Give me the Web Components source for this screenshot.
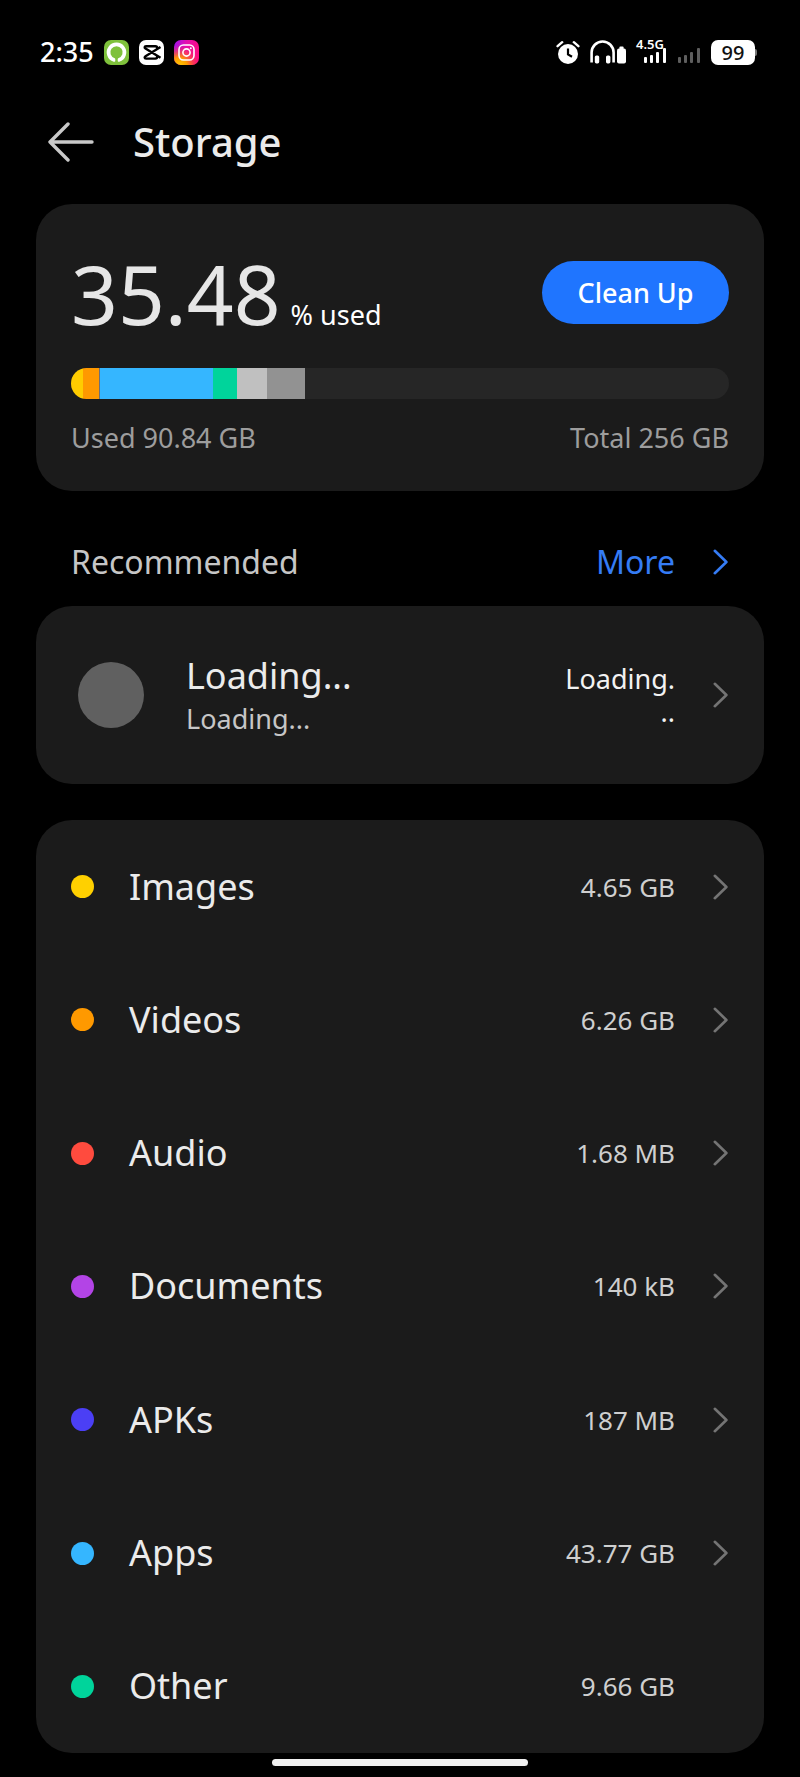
<!DOCTYPE html>
<html lang="en">
<head>
<meta charset="utf-8">
<meta name="viewport" content="width=device-width, initial-scale=1">
<title>Storage</title>
<style>
  body {
    margin: 0;
    background: #000;
    color: #ebebeb;
    font-family: "Noto Sans", sans-serif;
  }
</style>
</head>
<body>
<storage-app></storage-app>

<script>
/**
 * Attaches an open shadow root holding the element's styles and markup.
 */
class BaseElement extends HTMLElement {
  constructor() {
    super();
    this.attachShadow({ mode: "open" });
  }

  connectedCallback() {
    this.shadowRoot.innerHTML = /* html */`
    <style>
      *, :host { box-sizing: border-box; }
      ${this.constructor.STYLES}
    </style>
    ${this.render()}`;
  }

  render() {
    return "<slot></slot>";
  }

  static STYLES = "";
}

class ChevronIcon extends BaseElement {
  render() {
    return /* html */`
    <svg width="16" height="28" viewBox="0 0 16 28" fill="none" aria-hidden="true">
      <path d="M1.8 2.8L13.4 14L1.8 25.2" stroke="currentColor" stroke-width="2.6" stroke-linecap="round" stroke-linejoin="round"/>
    </svg>`;
  }

  static STYLES = /* css */`
  :host { display: block; flex: none; width: 16px; color: #747474; }
  svg { display: block; }`;
}

class StatusBar extends BaseElement {
  render() {
    return /* html */`
    <div class="group">
      <time>2:35</time>
      <svg width="25" height="25" viewBox="0 0 25 25" aria-hidden="true">
        <rect width="25" height="25" rx="7" fill="#7fc13c"/>
        <path d="M10.2 20A8 8 0 1 1 14.8 20" fill="none" stroke="#fff" stroke-width="3.6" stroke-linecap="round"/>
        <path d="M12.5 17.5V25" stroke="#7fc13c" stroke-width="2.4"/>
      </svg>
      <svg width="25" height="25" viewBox="0 0 25 25" aria-hidden="true">
        <rect width="25" height="25" rx="7" fill="#fff"/>
        <path d="M21.5 7L6.5 16.2C5.3 17 5.3 18.6 7 18.6H16.4C17.6 18.6 18.2 17.8 18.2 16.6M21.5 17.8L6.5 8.6C5.3 7.8 5.3 6.2 7 6.2H16.4C17.6 6.2 18.2 7 18.2 8.2" fill="none" stroke="#000" stroke-width="2.4" stroke-linejoin="round"/>
      </svg>
      <svg width="25" height="25" viewBox="0 0 25 25" aria-hidden="true">
        <defs>
          <linearGradient id="base" x1="0" y1="0" x2="1" y2="0.3">
            <stop offset="0" stop-color="#9a12ef"/>
            <stop offset="0.5" stop-color="#e60fae"/>
            <stop offset="1" stop-color="#fb0b83"/>
          </linearGradient>
          <radialGradient id="glow" cx="0.2" cy="1.05" r="0.85">
            <stop offset="0" stop-color="#ffd000"/>
            <stop offset="0.4" stop-color="#ff9a00"/>
            <stop offset="1" stop-color="#ff2a4a" stop-opacity="0"/>
          </radialGradient>
        </defs>
        <rect width="25" height="25" rx="7" fill="url(#base)"/>
        <rect width="25" height="25" rx="7" fill="url(#glow)"/>
        <g fill="none" stroke="#fff" stroke-width="1.6">
          <rect x="5" y="5" width="15" height="15" rx="4.4"/>
          <circle cx="12.5" cy="12.5" r="3.6"/>
        </g>
        <circle cx="16.8" cy="8.3" r="1" fill="#fff"/>
      </svg>
    </div>
    <div class="group">
      <svg width="24" height="25" viewBox="0 0 24 25" aria-hidden="true">
        <circle cx="12" cy="14" r="10" fill="#fff"/>
        <path d="M1.6 6.2L6.2 2.2M22.4 6.2L17.8 2.2" stroke="#fff" stroke-width="2.4" stroke-linecap="round"/>
        <path d="M12 8.5V14.4L16 16.8" fill="none" stroke="#000" stroke-width="2.2"/>
      </svg>
      <svg width="36" height="25" viewBox="0 0 36 25" aria-hidden="true">
        <path d="M1.6 22.5V12.5A11 11 0 0 1 23.6 12.5V22.5" fill="none" stroke="#fff" stroke-width="2.6"/>
        <rect x="4.8" y="15.4" width="4.4" height="8" rx="1.6" fill="#fff"/>
        <rect x="16" y="15.4" width="4.4" height="8" rx="1.6" fill="#fff"/>
        <rect x="27" y="8.6" width="9" height="15" rx="2" fill="#fff"/>
        <rect x="29.4" y="6.4" width="4.2" height="3" rx="1" fill="#fff"/>
      </svg>
      <div class="network">
        <span>4.5G</span>
        <svg width="24" height="16" viewBox="0 0 24 16" fill="#fff" aria-hidden="true">
          <rect x="1" y="10" width="3" height="6" rx="1"/>
          <rect x="7" y="8" width="3" height="8" rx="1"/>
          <rect x="13" y="5" width="3" height="11" rx="1"/>
          <rect x="20" y="1" width="3" height="15" rx="1"/>
        </svg>
      </div>
      <svg width="24" height="25" viewBox="0 0 24 25" fill="#5e5e5e" aria-hidden="true">
        <rect x="1" y="17" width="3" height="6" rx="1"/>
        <rect x="7" y="15" width="3" height="8" rx="1"/>
        <rect x="13" y="12" width="3" height="11" rx="1"/>
        <rect x="20" y="8" width="3" height="15" rx="1"/>
      </svg>
      <div class="battery">99</div>
    </div>`;
  }

  static STYLES = /* css */`
  :host {
    display: flex;
    justify-content: space-between;
    align-items: center;
    height: 104px;
    padding: 0 45px 0 40px;
    color: #fff;
  }

  .group { display: flex; align-items: center; gap: 10px; }
  svg { display: block; flex: none; }
  time { font-size: 27px; line-height: 36px; font-weight: 500; }

  .network {
    display: grid;
    width: 31px;
    height: 29px;
  }

  .network > * { grid-area: 1 / 1; }

  .network span {
    font-size: 13px;
    line-height: 13px;
    font-weight: 600;
  }

  .network svg {
    align-self: end;
    justify-self: end;
    margin-bottom: 4px;
  }

  .battery {
    position: relative;
    width: 44px;
    border-radius: 7px;
    background: #fff;
    color: #111;
    font-size: 20px;
    line-height: 25px;
    font-weight: 500;
    text-align: center;
  }

  .battery::after {
    content: "";
    position: absolute;
    left: 100%;
    top: 9px;
    width: 2px;
    height: 7px;
    border-radius: 0 2px 2px 0;
    background: #777;
  }`;
}

class PageHeader extends BaseElement {
  render() {
    return /* html */`
    <button type="button" aria-label="Back">
      <svg width="46" height="40" viewBox="0 0 46 40" fill="none" aria-hidden="true">
        <path d="M44 20H2M20 2L2 20L20 38" stroke="#c9c9c9" stroke-width="3.4" stroke-linecap="round" stroke-linejoin="round"/>
      </svg>
    </button>
    <h1><slot></slot></h1>`;
  }

  static STYLES = /* css */`
  :host {
    display: flex;
    align-items: center;
    gap: 39px;
    height: 76px;
    margin-bottom: 24px;
    padding: 0 48px;
  }

  button { padding: 0; border: 0; background: none; }
  svg { display: block; }
  h1 { margin: 0; font-size: 40px; line-height: 52px; font-weight: 500; }`;
}

class SurfaceCard extends BaseElement {
  static STYLES = /* css */`
  :host {
    display: block;
    margin: 0 36px;
    border-radius: 36px;
    background: #1b1b1b;
  }`;
}

/** Stretches of the usage bar, sized in gigabytes. */
const SEGMENTS = [
  { size: 4.65, color: "#ffcc00" },
  { size: 6.26, color: "#ff9900" },
  { size: 0.19, color: "#6b6f7a" },
  { size: 43.77, color: "#35b6ff" },
  { size: 9.66, color: "#00d49b" },
  { size: 11.6, color: "#c0c0c0" },
  { size: 14.7, color: "#929292" },
];
const TOTAL = 256;

class StorageUsage extends BaseElement {
  render() {
    const segments = SEGMENTS.map(({ size, color }) =>
      `<i style="width:${size / TOTAL * 100}%;background:${color}"></i>`).join("");

    return /* html */`
    <div class="summary">
      <p><strong>35.48</strong> <span>% used</span></p>
      <button type="button">Clean Up</button>
    </div>
    <div class="bar">${segments}</div>
    <div class="totals"><span>Used 90.84 GB</span><span>Total 256 GB</span></div>`;
  }

  static STYLES = /* css */`
  :host { display: block; padding: 36px 35px 35px; }

  .summary {
    display: flex;
    align-items: center;
    justify-content: space-between;
    height: 105px;
    margin-bottom: 23px;
  }

  p {
    display: flex;
    align-items: baseline;
    gap: 10px;
    margin: 0;
    font-size: 27px;
    line-height: 36px;
    color: #fff;
  }

  strong { font-size: 82px; line-height: 104px; font-weight: 400; color: #e6e6e6; }

  button {
    min-width: 187px;
    height: 63px;
    padding: 0 34px;
    border: 0;
    border-radius: 32px;
    background: #1f75ff;
    color: #fff;
    font: 500 27px/36px "Noto Sans", sans-serif;
  }

  .bar {
    display: flex;
    height: 31px;
    margin-bottom: 21px;
    border-radius: 16px;
    overflow: hidden;
    background: #262626;
  }

  i { min-width: 1px; }

  .totals {
    display: flex;
    justify-content: space-between;
    font-size: 27px;
    line-height: 36px;
    color: #9d9d9d;
  }`;
}

class SectionHeading extends BaseElement {
  render() {
    return /* html */`
    <h2><slot></slot></h2>
    <a href="#more">More <chevron-icon></chevron-icon></a>`;
  }

  static STYLES = /* css */`
  :host {
    display: flex;
    justify-content: space-between;
    padding: 49px 71px 22px;
    font-size: 32px;
    line-height: 44px;
  }

  h2 { margin: 0; font-size: inherit; font-weight: 400; color: #c6c6c6; }

  a {
    display: flex;
    align-items: center;
    gap: 38px;
    color: #357cf5;
    text-decoration: none;
  }

  chevron-icon { color: inherit; }`;
}

class RecommendedItem extends BaseElement {
  render() {
    return /* html */`
    <a href="#recommended">
      <span class="avatar"></span>
      <span class="text">
        <span class="title"><slot name="title"></slot></span>
        <span class="detail"><slot name="detail"></slot></span>
      </span>
      <span class="status"><slot name="status"></slot></span>
      <chevron-icon></chevron-icon>
    </a>`;
  }

  static STYLES = /* css */`
  :host { display: block; }

  a {
    display: flex;
    align-items: center;
    min-height: 178px;
    padding: 0 35px 0 42px;
    color: inherit;
    text-decoration: none;
  }

  .avatar {
    width: 66px;
    height: 66px;
    margin-right: 42px;
    border-radius: 50%;
    background: #606060;
  }

  .text { display: grid; gap: 2px; flex: 1; }
  .title { font-size: 36px; line-height: 46px; }
  .detail { font-size: 27px; line-height: 36px; color: #c6c6c6; }

  .status {
    width: 115px;
    margin-right: 38px;
    font-size: 27px;
    line-height: 33px;
    text-align: right;
    overflow-wrap: anywhere;
    color: #f2f2f2;
  }`;
}

class StorageCategory extends BaseElement {
  render() {
    const chevron = this.hasAttribute("static") ? "<span class=\"spacer\"></span>" : "<chevron-icon></chevron-icon>";

    return /* html */`
    <a href="#category">
      <span class="dot" style="background:${this.getAttribute("color")}"></span>
      <span class="name"><slot></slot></span>
      <span class="size">${this.getAttribute("size")}</span>
      ${chevron}
    </a>`;
  }

  static STYLES = /* css */`
  :host { display: grid; }

  a {
    display: flex;
    align-items: center;
    padding: 0 35px;
    color: inherit;
    text-decoration: none;
  }

  .dot {
    width: 23px;
    height: 23px;
    margin-right: 35px;
    border-radius: 50%;
  }

  .name { flex: 1; font-size: 36px; line-height: 46px; }
  .size { margin-right: 38px; font-size: 26px; line-height: 36px; color: #cfcfcf; }
  .spacer { width: 16px; }`;
}

class HomeIndicator extends BaseElement {
  render() {
    return "<div></div>";
  }

  static STYLES = /* css */`
  :host { display: block; padding: 6px 0 11px; }
  div { width: 32%; height: 7px; margin: 0 auto; border-radius: 4px; background: #f0f0f0; }`;
}

class StorageApp extends BaseElement {
  render() {
    return /* html */`
    <status-bar></status-bar>
    <page-header>Storage</page-header>
    <main>
      <surface-card><storage-usage></storage-usage></surface-card>
      <section-heading>Recommended</section-heading>
      <surface-card>
        <recommended-item>
          <span slot="title">Loading...</span>
          <span slot="detail">Loading...</span>
          <span slot="status">Loading...</span>
        </recommended-item>
      </surface-card>
      <surface-card class="categories">
        <storage-category color="#ffd000" size="4.65 GB">Images</storage-category>
        <storage-category color="#ff9900" size="6.26 GB">Videos</storage-category>
        <storage-category color="#ff4b3e" size="1.68 MB">Audio</storage-category>
        <storage-category color="#b344e6" size="140 kB">Documents</storage-category>
        <storage-category color="#4b3ff5" size="187 MB">APKs</storage-category>
        <storage-category color="#35b6ff" size="43.77 GB">Apps</storage-category>
        <storage-category color="#00d49b" size="9.66 GB" static>Other</storage-category>
      </surface-card>
    </main>
    <home-indicator></home-indicator>`;
  }

  static STYLES = /* css */`
  :host { display: flex; flex-direction: column; min-height: 100vh; }
  main { display: flex; flex-direction: column; flex: 1; }

  .categories {
    display: grid;
    grid-auto-rows: minmax(96px, 1fr);
    flex: 1;
    margin-top: 36px;
  }`;
}

customElements.define("chevron-icon", ChevronIcon);
customElements.define("status-bar", StatusBar);
customElements.define("page-header", PageHeader);
customElements.define("surface-card", SurfaceCard);
customElements.define("storage-usage", StorageUsage);
customElements.define("section-heading", SectionHeading);
customElements.define("recommended-item", RecommendedItem);
customElements.define("storage-category", StorageCategory);
customElements.define("home-indicator", HomeIndicator);
customElements.define("storage-app", StorageApp);
</script>
</body>
</html>
